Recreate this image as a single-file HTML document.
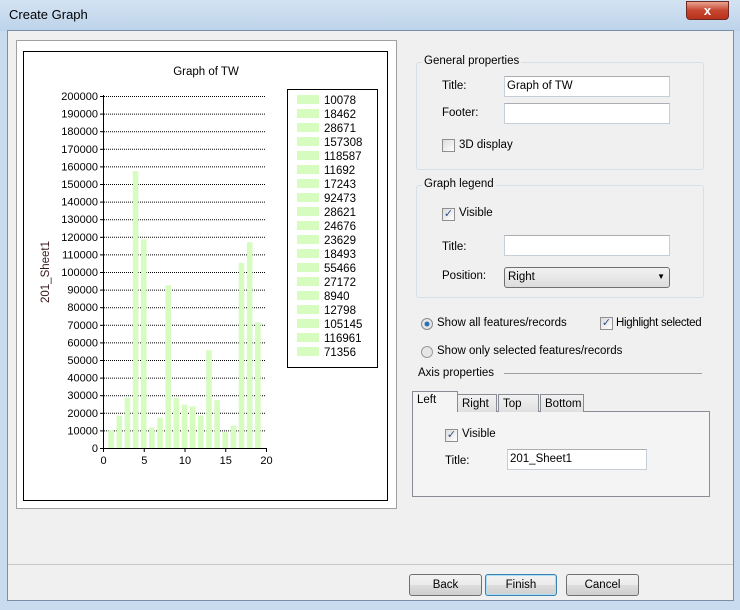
<!DOCTYPE html>
<html><head><style>
*{box-sizing:border-box}
body{margin:0;width:740px;height:610px;overflow:hidden;background:#c9dbee;font-family:"Liberation Sans",sans-serif;font-size:11.5px;color:#000;position:relative}
.abs{position:absolute}
.title{left:0;top:0;width:740px;height:31px;background:linear-gradient(#d4e3f3,#bcd3ea)}
.frame{left:7px;top:30px;width:727px;height:571px;background:#f0f0f0;border:1px solid #7a8ea8}
.close{left:686px;top:1px;width:43px;height:19px;border:1px solid #6d2a22;border-radius:0 0 4px 4px;background:linear-gradient(#e8a290,#c7462f 50%,#b8321c);color:#fff;font-weight:bold;text-align:center;font-size:13px;line-height:17px}
.grp{border:1px solid #d5dfe5;border-radius:3px}
.lab{font-size:11.5px;white-space:nowrap}
.inp{background:#fff;border:1px solid #c6cfd8;border-top-color:#abadb3;height:21px;padding:3px 2px;font-size:11.5px}
.cb{width:13px;height:13px;border:1px solid #8f8f8f;background:linear-gradient(135deg,#dcdcdc,#fff);font-size:11px;line-height:11px;color:#2f4d8e;text-align:center}
.btn{height:22px;border:1px solid #707070;border-radius:3px;background:linear-gradient(#f2f2f2,#ebebeb 50%,#dddddd 51%,#cfcfcf);text-align:center;line-height:20px}
.tab{height:18px;border:1px solid #898c95;border-bottom:none;background:linear-gradient(#f2f2f2,#e0e0e0);padding:3px 4px 0;font-size:11.5px;white-space:nowrap}
</style></head><body>
<div class="abs title"></div>
<div class="abs" style="left:9px;top:7px;font-size:13px">Create Graph</div>
<div class="abs close">x</div>
<div class="abs frame"></div>
<div class="abs" style="left:16px;top:40px;width:381px;height:469px;background:#fff;border:1px solid #a0a0a0"></div>
<svg class="abs" style="left:0;top:0" width="740" height="610">
<rect x="23.5" y="51.5" width="364" height="449" fill="#fff" stroke="#000"/>
<text x="206" y="75" font-size="11.5" text-anchor="middle" font-family="Liberation Sans">Graph of TW</text>
<text transform="translate(49,272) rotate(-90)" font-size="11.5" text-anchor="middle" font-family="Liberation Sans" fill="#3a1a1a">201_Sheet1</text>
<g id="g"></g>
</svg>
<script>
(function(){
var s='',vals=[10078,18462,28671,157308,118587,11692,17243,92473,28621,24676,23629,18493,55466,27172,8940,12798,105145,116961,71356];
for(var i=0;i<=20;i++){var y=448-i*17.6;var v=i*10000;
 if(i>0)s+='<line x1="104" x2="266" y1="'+(y+.5)+'" y2="'+(y+.5)+'" stroke="#000" stroke-dasharray="1,1"/>';
 s+='<line x1="100" x2="103" y1="'+(y+.5)+'" y2="'+(y+.5)+'" stroke="#000"/>';
 s+='<text x="98" y="'+(y+4)+'" font-size="11" text-anchor="end" font-family="Liberation Sans">'+v+'</text>';}
for(var j=0;j<vals.length;j++){var cx=103+(j+1)*8.15;var h=vals[j]*0.00176;
 s+='<rect x="'+(cx-2.8)+'" y="'+(448-h)+'" width="5.6" height="'+h+'" fill="#d6fcc0"/>';}
s+='<line x1="103.5" x2="103.5" y1="95" y2="449" stroke="#000"/><line x1="103" x2="267" y1="448.5" y2="448.5" stroke="#000"/>';
for(var k=0;k<=4;k++){var x=103.5+k*40.75;s+='<line x1="'+x+'" x2="'+x+'" y1="448" y2="452" stroke="#000"/><text x="'+x+'" y="464" font-size="11" text-anchor="middle" font-family="Liberation Sans">'+(k*5)+'</text>';}
s+='<rect x="287.5" y="89.5" width="90" height="278" fill="#fff" stroke="#000"/>';
for(var j=0;j<vals.length;j++){var y=95+j*14;s+='<rect x="297" y="'+y+'" width="22" height="9" fill="#d6fcc0"/><text x="324" y="'+(y+9)+'" font-size="11.5" font-family="Liberation Sans">'+vals[j]+'</text>';}
document.getElementById('g').innerHTML=s;})();
</script>
<div class="abs grp" style="left:416px;top:62px;width:288px;height:108px"></div>
<div class="abs lab" style="left:422px;top:55px;background:#f0f0f0;padding:0 2px">General properties</div>
<div class="abs lab" style="left:442px;top:80px">Title:</div>
<div class="abs inp" style="left:504px;top:76px;width:166px">Graph of TW</div>
<div class="abs lab" style="left:442px;top:107px">Footer:</div>
<div class="abs inp" style="left:504px;top:103px;width:166px"></div>
<div class="abs cb" style="left:442px;top:139px"></div>
<div class="abs lab" style="left:459px;top:139px">3D display</div>
<div class="abs grp" style="left:416px;top:185px;width:288px;height:113px"></div>
<div class="abs lab" style="left:422px;top:178px;background:#f0f0f0;padding:0 2px">Graph legend</div>
<div class="abs cb" style="left:442px;top:208px">✓</div>
<div class="abs lab" style="left:459px;top:207px">Visible</div>
<div class="abs lab" style="left:442px;top:241px">Title:</div>
<div class="abs inp" style="left:504px;top:235px;width:166px"></div>
<div class="abs lab" style="left:442px;top:270px">Position:</div>
<div class="abs" style="left:504px;top:267px;width:166px;height:21px;border:1px solid #707070;border-radius:3px;background:linear-gradient(#f2f2f2,#dcdcdc);padding:3px 3px;font-size:11.5px">Right<span style="position:absolute;right:4px;top:4px;font-size:8px">▼</span></div>
<div class="abs" style="left:421px;top:318px;width:12px;height:12px;border-radius:50%;border:1px solid #8a8a8a;background:radial-gradient(#2a6fb4 30%,#e8e8e8 40%)"></div>
<div class="abs lab" style="left:437px;top:317px">Show all features/records</div>
<div class="abs cb" style="left:600px;top:317px">✓</div>
<div class="abs lab" style="left:616px;top:317px;letter-spacing:-0.3px">Highlight selected</div>
<div class="abs" style="left:421px;top:346px;width:12px;height:12px;border-radius:50%;border:1px solid #9a9a9a;background:#e6e6e6"></div>
<div class="abs lab" style="left:437px;top:345px">Show only selected features/records</div>
<div class="abs lab" style="left:418px;top:367px">Axis properties</div>
<div class="abs" style="left:504px;top:373px;width:198px;height:1px;background:#a0a0a0"></div>
<div class="abs" style="left:412px;top:411px;width:298px;height:86px;border:1px solid #898c95;background:#f4f4f4"></div>
<div class="abs tab" style="left:412px;top:391px;width:46px;height:21px;background:#f4f4f4;padding-top:2px">Left</div>
<div class="abs tab" style="left:457px;top:394px;width:40px">Right</div>
<div class="abs tab" style="left:498px;top:394px;width:41px">Top</div>
<div class="abs tab" style="left:540px;top:394px;width:44px">Bottom</div>
<div class="abs cb" style="left:445px;top:429px">✓</div>
<div class="abs lab" style="left:462px;top:428px">Visible</div>
<div class="abs lab" style="left:445px;top:455px">Title:</div>
<div class="abs inp" style="left:507px;top:449px;width:140px">201_Sheet1</div>
<div class="abs" style="left:8px;top:564px;width:725px;height:1px;background:#c8c8c8"></div>
<div class="abs btn" style="left:409px;top:574px;width:73px">Back</div>
<div class="abs btn" style="left:485px;top:574px;width:72px;border-color:#3c7fb1;box-shadow:inset 0 0 0 1px #a9e0f8">Finish</div>
<div class="abs btn" style="left:566px;top:574px;width:73px">Cancel</div>
</body></html>
